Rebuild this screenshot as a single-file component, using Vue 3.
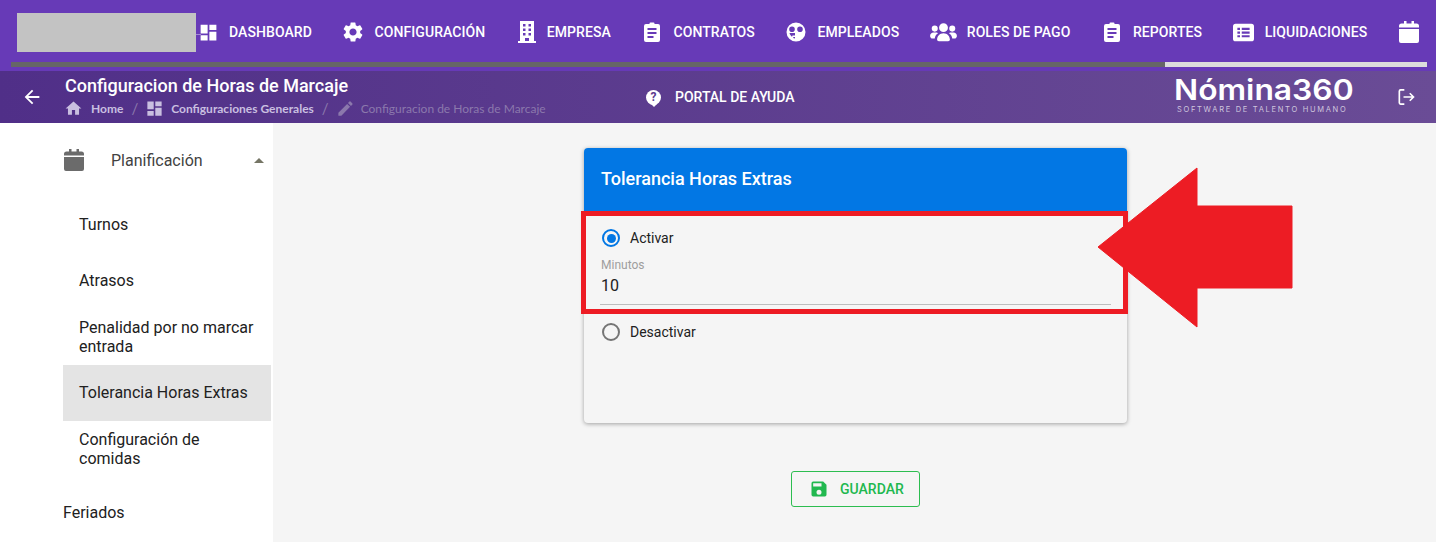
<template>
  <div class="page">
    <!-- top nav -->
    <header class="topbar">
      <div class="logo-slot"><div class="logo-box"></div></div>
      <nav class="nav">
        <a v-for="item in navItems" :key="item.icon + item.label" class="nav-item" :class="'item-' + item.icon">
          <svg class="nav-icon" :class="item.icon" viewBox="0 0 24 24" fill="#fff" fill-rule="evenodd">
            <path :d="icons[item.icon]" />
          </svg>
          <span v-if="item.label">{{ item.label }}</span>
        </a>
      </nav>
    </header>
    <div class="progress-row">
      <div class="progress"><div class="progress-bar"></div></div>
    </div>

    <!-- sub header -->
    <div class="subheader">
      <svg class="back" viewBox="0 0 24 24" fill="#fff"><path :d="icons.back" /></svg>
      <div class="heading">
        <div class="title">Configuracion de Horas de Marcaje</div>
        <div class="crumbs">
          <svg viewBox="0 0 24 24"><path :d="icons.home" /></svg>
          <b>Home</b>
          <i>/</i>
          <svg viewBox="0 0 24 24"><path :d="icons.dashboard" /></svg>
          <b>Configuraciones Generales</b>
          <i>/</i>
          <svg class="dim" viewBox="0 0 24 24"><path :d="icons.pencil" /></svg>
          <span>Configuracion de Horas de Marcaje</span>
        </div>
      </div>
      <div class="help">
        <span class="help-icon">?</span>
        PORTAL DE AYUDA
      </div>
      <div class="brand">
        <div class="brand-name">Nómina360</div>
        <div class="brand-sub">SOFTWARE DE TALENTO HUMANO</div>
      </div>
      <svg class="exit" viewBox="0 0 24 24" fill="none" stroke="#fff" stroke-width="2">
        <path d="M10 3.500H5.500a1.500 1.500 0 0 0-1.500 1.500v14a1.500 1.500 0 0 0 1.500 1.500H10" />
        <path d="M9 12h12M16.500 7.500 21 12l-4.500 4.500" />
      </svg>
    </div>

    <div class="content">
      <!-- sidebar -->
      <aside class="sidebar">
        <div class="group">
          <svg class="group-icon" viewBox="0 0 24 24" fill="#6b6b6b"><path :d="icons.calendar" /></svg>
          <span class="group-label">Planificación</span>
          <span class="caret"></span>
        </div>
        <div class="menu-list">
          <div
            v-for="item in menu"
            :key="item"
            class="menu-item"
            :class="{ active: item === 'Tolerancia Horas Extras' }"
          >
            {{ item }}
          </div>
        </div>
        <div class="menu-root">Feriados</div>
      </aside>

      <!-- main -->
      <main class="main">
        <div class="card">
          <div class="card-head">Tolerancia Horas Extras</div>
          <div class="card-body">
            <label class="radio">
              <span class="radio-dot on"></span>
              Activar
            </label>
            <div class="field">
              <div class="field-label">Minutos</div>
              <div class="field-value">10</div>
            </div>
            <label class="radio second">
              <span class="radio-dot"></span>
              Desactivar
            </label>
          </div>
          <div class="red-box"></div>
          <svg class="red-arrow" viewBox="0 0 196 162">
            <path d="M1 80 100 1V39H195V121H100V160Z" fill="#ed1c24" stroke="#ed1c24" stroke-linejoin="round" />
          </svg>
        </div>
        <button class="save">
          <svg viewBox="0 0 24 24" fill="#21b84f"><path :d="icons.save" /></svg>
          GUARDAR
        </button>
      </main>
    </div>
  </div>
</template>

<script setup>
// iconos
const icons = {
  dashboard: "M3 13h8V3H3v10zm0 8h8v-6H3v6zm10 0h8V11h-8v10zm0-18v6h8V3h-8z",
  settings:
    "M19.14 12.94c.04-.3.06-.61.06-.94 0-.32-.02-.64-.07-.94l2.03-1.58a.49.49 0 0 0 .12-.61l-1.92-3.32a.488.488 0 0 0-.59-.22l-2.39.96c-.5-.38-1.03-.7-1.62-.94l-.36-2.54a.484.484 0 0 0-.48-.41h-3.84c-.24 0-.43.17-.47.41l-.36 2.54c-.59.24-1.13.57-1.62.94l-2.39-.96c-.22-.08-.47 0-.59.22L2.74 8.87c-.12.21-.08.47.12.61l2.03 1.58c-.05.3-.09.63-.09.94s.02.64.07.94l-2.03 1.58a.49.49 0 0 0-.12.61l1.92 3.32c.12.22.37.29.59.22l2.39-.96c.5.38 1.03.7 1.62.94l.36 2.54c.05.24.24.41.48.41h3.84c.24 0 .44-.17.47-.41l.36-2.54c.59-.24 1.13-.56 1.62-.94l2.39.96c.22.08.47 0 .59-.22l1.92-3.32c.12-.22.07-.47-.12-.61l-2.01-1.58zM12 15.6c-1.98 0-3.6-1.62-3.6-3.6s1.62-3.6 3.6-3.6 3.6 1.62 3.6 3.6-1.62 3.6-3.6 3.6z",
  building:
    "M5 1h14v20h2v2H3v-2h2V1zM8 4v2.500h2.500V4H8zm5.500 0v2.500H16V4h-2.500zM8 8.500V11h2.500V8.500H8zm5.500 0V11H16V8.500h-2.500zM8 13v2.500h2.500V13H8zm5.500 0v2.500H16V13h-2.500zM10 18v3h4v-3h-4z",
  clipboard:
    "M9.500 4V3.500a1 1 0 0 1 1-1h3a1 1 0 0 1 1 1V4H18a2 2 0 0 1 2 2v14a2 2 0 0 1-2 2H6a2 2 0 0 1-2-2V6a2 2 0 0 1 2-2h3.500zM7.500 8v2h9V8h-9zm0 4v2h9v-2h-9zm0 4v2h6v-2h-6z",
  face:
    "M12 2.500a9.500 9.500 0 1 1 0 19 9.500 9.500 0 0 1 0-19zM8 6.500a2.800 2.800 0 1 0 0 5.600 2.800 2.800 0 0 0 0-5.600zm8 0a2.800 2.800 0 1 0 0 5.600 2.800 2.800 0 0 0 0-5.600zM11 13H5.500c.4 1.600 1.200 2.800 2.500 3.800l.5-1.300H11V13zm0 4H9.500l-.5 1c.6.300 1.300.5 2 .6V17z",
  users:
    "M12 4.500a3.800 3.800 0 1 1 0 7.600 3.800 3.800 0 0 1 0-7.600zM4.500 6.500a2.600 2.600 0 1 1 0 5.200 2.600 2.600 0 0 1 0-5.200zm15 0a2.600 2.600 0 1 1 0 5.200 2.600 2.600 0 0 1 0-5.200zM6.500 18.500c0-3 2.300-5.500 5.500-5.500s5.500 2.500 5.500 5.500c0 .8-.7 1.500-1.500 1.500H8c-.8 0-1.500-.7-1.500-1.500zM.5 15.500c0-1.800 1.300-3 3-3h2.500c.5 0 1 .2 1.300.5-1.700 1-2.600 2.800-2.800 4.500H2c-.8 0-1.500-1-1.500-2zm23 0c0 1-.7 2-1.500 2h-2.500c-.2-1.700-1.100-3.500-2.800-4.500.3-.3.8-.5 1.300-.5H20.500c1.700 0 3 1.200 3 3z",
  list:
    "M3 2h18a3 3 0 0 1 3 3v14a3 3 0 0 1-3 3H3a3 3 0 0 1-3-3V5a3 3 0 0 1 3-3zm2 4.500V9h3V6.500H5zm5 0V9h9V6.500h-9zm-5 4.300v2.500h3v-2.500H5zm5 0v2.500h9v-2.500h-9zM5 15v2.500h3V15H5zm5 0v2.500h9V15h-9z",
  calendar:
    "M7 1h2.500v2.500h5V1H17v2.500h2.500A2.500 2.500 0 0 1 22 6v1.500H2V6a2.500 2.500 0 0 1 2.500-2.500H7V1zM2 9h20v12a2 2 0 0 1-2 2H4a2 2 0 0 1-2-2V9z",
  back: "M20 11H7.830l5.590-5.590L12 4l-8 8 8 8 1.410-1.410L7.830 13H20v-2z",
  home: "M10 20v-6h4v6h5v-8h3L12 3 2 12h3v8z",
  pencil:
    "M3 17.250V21h3.750L17.810 9.940l-3.750-3.750L3 17.250zM20.710 7.040a1 1 0 0 0 0-1.410l-2.340-2.340a1 1 0 0 0-1.410 0l-1.830 1.830 3.750 3.750 1.830-1.830z",
  save: "M15 9H5V5h10v4zm-3 10a3 3 0 1 1 0-6 3 3 0 0 1 0 6zM17 3H5a2 2 0 0 0-2 2v14a2 2 0 0 0 2 2h14a2 2 0 0 0 2-2V7l-4-4z",
};

// menu
const navItems = [
  { icon: "dashboard", label: "DASHBOARD" },
  { icon: "settings", label: "CONFIGURACIÓN" },
  { icon: "building", label: "EMPRESA" },
  { icon: "clipboard", label: "CONTRATOS" },
  { icon: "face", label: "EMPLEADOS" },
  { icon: "users", label: "ROLES DE PAGO" },
  { icon: "clipboard", label: "REPORTES" },
  { icon: "list", label: "LIQUIDACIONES" },
  { icon: "calendar", label: "" },
];

const menu = [
  "Turnos",
  "Atrasos",
  "Penalidad por no marcar entrada",
  "Tolerancia Horas Extras",
  "Configuración de comidas",
];
</script>

<style>
html,
body {
  margin: 0;
  overflow: hidden;
}
</style>

<style scoped>
.page {
  width: 1436px;
  height: 542px;
  overflow: hidden;
  display: flex;
  flex-direction: column;
  background-color: #f5f5f5;
  font-family: Roboto, "Liberation Sans", sans-serif;
}

/* top nav */
.topbar {
  height: 62px;
  flex: none;
  display: flex;
  background-color: #673ab7;
  overflow: hidden;
}
.logo-slot {
  width: 184px;
  height: 35px;
  flex: none;
  margin-left: 17px;
  padding-top: 13px;
  background: linear-gradient(#fff6, #fff6) 0 34px / 184px 1px no-repeat;
}
.logo-box {
  width: 179px;
  height: 39px;
  background-color: #c3c3c3;
}
.nav {
  display: flex;
  align-items: center;
  gap: 29.5px;
  margin-left: -5px;
  padding-top: 2px;
}
.nav-item {
  display: flex;
  align-items: center;
  gap: 9px;
  color: #fff;
  font-size: 14px;
  font-weight: 500;
  letter-spacing: 0.08px;
  white-space: nowrap;
}
.nav-item.item-building {
  gap: 8px;
}
.nav-icon {
  width: 24px;
  height: 24px;
  flex: none;
}
.nav-icon.dashboard {
  width: 21px;
  height: 21px;
  margin: 0 1.5px;
}
.nav-icon.users {
  width: 29px;
  height: 28px;
}
.nav-icon.list {
  width: 21px;
  height: 21px;
  margin: 0 1.5px;
}
.progress-row {
  height: 9px;
  flex: none;
  background-color: #673ab7;
}
.progress {
  height: 5px;
  margin: 0 9px 0 11px;
  background-color: #dcdcdc;
}
.progress-bar {
  width: 1154px;
  height: 5px;
  background-color: #666;
}

/* sub header */
.subheader {
  height: 52px;
  flex: none;
  display: flex;
  align-items: center;
  color: #fff;
  background: linear-gradient(90deg, #502f88, #6a4c96);
}
.back {
  width: 22px;
  height: 22px;
  margin-left: 21px;
  flex: none;
}
.heading {
  width: 581px;
  margin-left: 22px;
  padding-top: 4px;
  flex: none;
  align-self: flex-start;
}
.title {
  font-size: 18px;
  font-weight: 500;
  line-height: 22px;
}
.crumbs {
  display: flex;
  align-items: center;
  height: 18px;
  margin-top: 2px;
  font-family: Lato, "Liberation Sans", sans-serif;
  font-size: 12px;
  color: #a998c8;
}
.crumbs svg {
  width: 19px;
  height: 19px;
  margin: 0 -1px;
  fill: #c9bfe0;
  flex: none;
}
.crumbs svg.dim {
  fill: #8b78ac;
}
.crumbs b {
  margin-left: 8px;
  color: #c9bfe0;
  font-weight: 700;
}
.crumbs svg:first-child + b {
  margin-left: 9px;
}
.crumbs i {
  margin: 0 8px;
  font-size: 15px;
  font-style: normal;
  color: #8b78ac;
}
.crumbs span {
  margin-left: 7px;
  color: #8b78ac;
}
.help {
  display: flex;
  align-items: center;
  width: 529px;
  flex: none;
  font-size: 14px;
  font-weight: 500;
}
.help-icon {
  position: relative;
  width: 15px;
  height: 15px;
  margin-right: 14px;
  border-radius: 50%;
  background-color: #fff;
  color: #5a3a8e;
  font-size: 12px;
  font-weight: 700;
  line-height: 15px;
  text-align: center;
}
.help-icon::after {
  content: "";
  position: absolute;
  left: 5px;
  bottom: -2px;
  border: 3px solid transparent;
  border-bottom: 0;
  border-top-color: #fff;
}
.brand {
  width: 223px;
  flex: none;
  margin-left: -1px;
  padding-top: 7px;
  align-self: flex-start;
}
.brand-name {
  font-family: Inter, sans-serif;
  font-size: 28px;
  font-weight: 600;
  line-height: 24px;
  transform: scaleX(1.135);
  transform-origin: left center;
}
.brand-sub {
  font-family: Inter, sans-serif;
  font-size: 7.500px;
  line-height: 9px;
  margin: 3px 0 0 3px;
  letter-spacing: 1.700px;
  color: #cfc6de;
}
.exit {
  width: 20px;
  height: 20px;
  margin-left: -1px;
  flex: none;
}

.content {
  flex: 1;
  display: flex;
  min-height: 0;
}

/* sidebar */
.sidebar {
  width: 273px;
  flex: none;
  box-sizing: border-box;
  padding: 9px 2px 0 63px;
  background-color: #fff;
  color: #212121;
  font-size: 16px;
}
.group {
  display: flex;
  align-items: center;
  height: 56px;
}
.group-icon {
  width: 24px;
  height: 24px;
  margin-left: -1px;
  flex: none;
}
.group-label {
  margin-left: 25px;
  color: #424242;
}
.caret {
  margin-left: auto;
  margin-right: 7px;
  border: 5px solid transparent;
  border-top: 0;
  border-bottom-color: #757565;
}
.menu-list {
  margin-top: 9px;
}
.menu-item {
  height: 56px;
  display: flex;
  align-items: center;
  box-sizing: border-box;
  padding: 0 16px 1px 16px;
  line-height: 19px;
}
.menu-item.active {
  background-color: #e4e4e4;
}
.menu-root {
  height: 56px;
  margin-top: 7px;
  display: flex;
  align-items: center;
}

/* main */
.main {
  flex: 1;
  display: flex;
  flex-direction: column;
  align-items: center;
  padding: 25px 0 0 2px;
  box-sizing: border-box;
}
.card {
  position: relative;
  width: 543px;
  height: 275px;
  border-radius: 4px;
  background-color: #f5f5f5;
  box-shadow: 0 1px 4px rgba(0, 0, 0, 0.35);
}
.card-head {
  height: 61px;
  display: flex;
  align-items: center;
  padding: 0 0 2px 17px;
  border-radius: 4px 4px 0 0;
  background-color: #0277e4;
  color: #fff;
  font-size: 18px;
  font-weight: 500;
}
.card-body {
  padding: 15px 16px 0 16px;
  font-size: 14px;
  color: #212121;
}
.radio {
  display: flex;
  align-items: center;
  height: 24px;
  padding-left: 2px;
}
.radio.second {
  margin-top: 15px;
}
.radio-dot {
  position: relative;
  width: 14px;
  height: 14px;
  margin-right: 10px;
  border: 2px solid #757575;
  border-radius: 50%;
}
.radio-dot.on {
  border-color: #0277e4;
}
.radio-dot.on::after {
  content: "";
  position: absolute;
  inset: 2.5px;
  border-radius: 50%;
  background-color: #0277e4;
}
.field {
  margin-top: 8px;
  height: 47px;
  box-sizing: border-box;
  border-bottom: 1px solid #bdbdbd;
  padding-left: 1px;
}
.field-label {
  font-size: 12px;
  line-height: 14px;
  color: #9e9e9e;
}
.field-value {
  margin-top: 3px;
  font-size: 16px;
  line-height: 22px;
  color: #212121;
}
.red-box {
  position: absolute;
  left: -3px;
  top: 63px;
  width: 547px;
  height: 103px;
  box-sizing: border-box;
  border: 5px solid #ed1c24;
}
.red-arrow {
  position: absolute;
  left: 513px;
  top: 19px;
  width: 196px;
  height: 162px;
}
.save {
  display: flex;
  align-items: center;
  width: 129px;
  height: 36px;
  margin-top: 48px;
  padding: 0 0 0 17px;
  box-sizing: border-box;
  border: 1px solid #2dbd50;
  border-radius: 3px;
  background: transparent;
  color: #21b84f;
  font-family: inherit;
  font-size: 14px;
  font-weight: 500;
}
.save svg {
  width: 20px;
  height: 20px;
  margin-right: 11px;
}
</style>
